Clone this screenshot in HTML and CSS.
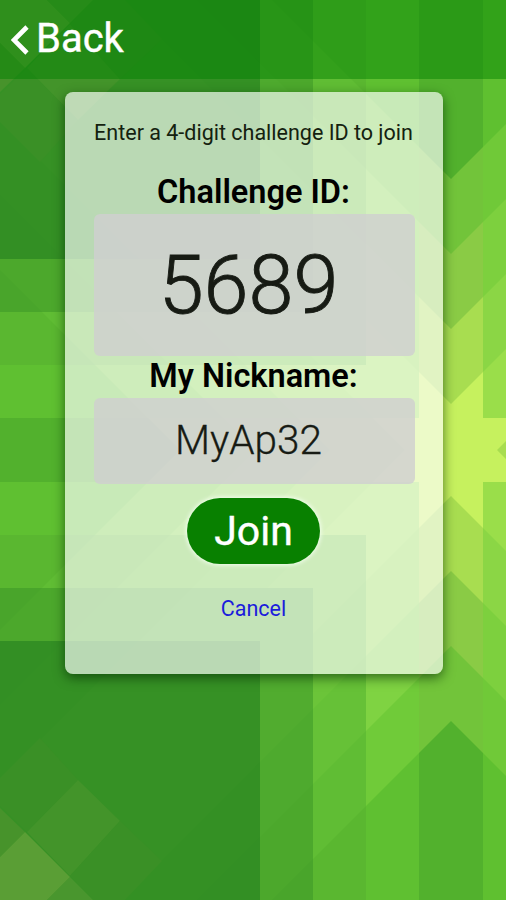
FILE: index.html
```html
<!DOCTYPE html>
<html lang="en">
<head>
<meta charset="utf-8">
<title>Join challenge</title>
<link rel="stylesheet" href="styles.css">
</head>
<body>
<svg class="backdrop" viewBox="0 0 506 900" aria-hidden="true">
  <defs>
    <path id="s4" d="M451 179L951-321L1222-50L722 450L1222 950L951 1221L451 721L-49 1221L-320 950L180 450L-320-50L-49-321Z"/>
    <path id="s3" d="M451 254L951-246L1147-50L647 450L1147 950L951 1146L451 646L-49 1146L-245 950L255 450L-245-50L-49-246Z"/>
    <path id="s2" d="M451 329L951-171L1072-50L572 450L1072 950L951 1071L451 571L-49 1071L-170 950L330 450L-170-50L-49-171Z"/>
    <path id="s1" d="M451 404L951-96L997-50L497 450L997 950L951 996L451 496L-49 996L-95 950L405 450L-95-50L-49-96Z"/>
    <clipPath id="cC"><path d="M0 0H419V418H0ZM0 482H419V900H0Z"/></clipPath>
    <clipPath id="cD"><path d="M0 0H366V365H0ZM0 535H366V900H0Z"/></clipPath>
    <clipPath id="cE"><path d="M0 0H313V312H0ZM0 588H313V900H0Z"/></clipPath>
    <clipPath id="cF"><path d="M0 0H260V259H0ZM0 641H260V900H0Z"/></clipPath>
    <clipPath id="cR"><path d="M483 0H506V418H483ZM483 482H506V900H483Z"/></clipPath>
  </defs>
  <rect width="506" height="900" fill="#52b12d"/>
  <use href="#s4" fill="#72c43a"/><use href="#s3" fill="#8acb45"/><use href="#s2" fill="#a8dd50"/><use href="#s1" fill="#c6f15e"/>
  <g clip-path="url(#cR)">
    <rect width="506" height="900" fill="#5fc030"/>
    <use href="#s4" fill="#70c938"/><use href="#s3" fill="#7dd03e"/><use href="#s2" fill="#8bd645"/><use href="#s1" fill="#9ade4a"/>
  </g>
  <g clip-path="url(#cC)">
    <rect width="506" height="900" fill="#5fc031"/>
    <use href="#s4" fill="#70cb39"/><use href="#s3" fill="#7fd342"/><use href="#s2" fill="#8cd947"/><use href="#s1" fill="#95de4c"/>
  </g>
  <g clip-path="url(#cD)">
    <rect width="506" height="900" fill="#5ab730"/>
    <use href="#s4" fill="#60bd34"/><use href="#s3" fill="#66c137"/><use href="#s2" fill="#6bc439"/><use href="#s1" fill="#70c73d"/>
  </g>
  <g clip-path="url(#cE)">
    <rect width="506" height="900" fill="#49a52b"/>
    <use href="#s4" fill="#4ca82c"/><use href="#s3" fill="#4eaa2e"/><use href="#s2" fill="#51ac2f"/>
  </g>
  <g clip-path="url(#cF)">
    <rect width="506" height="900" fill="#328e24"/>
    <use href="#s4" fill="#338f24"/><use href="#s3" fill="#349024"/><use href="#s2" fill="#369125"/>
    <g id="tiles">
      <path fill="#3a9026" d="M40 738L78 780L27 832L0 806V778Z"/>
      <path fill="#47932b" d="M0 808L25 832L0 857Z"/>
      <path fill="#43942a" d="M78 780L120 821L70 876L27 832Z"/>
      <path fill="#3a9026" d="M120 821L162 861L125 900H93L70 876Z"/>
      <path fill="#49962e" d="M70 877L93 900H47Z"/>
      <path fill="#5a9e35" d="M25 832L70 877L47 900H0V857Z"/>
    </g>
    <use href="#tiles" transform="matrix(1 0 0 -1 0 900)"/>
  </g>
</svg>
<div class="screen">
  <header class="topbar">
    <svg class="chevron" viewBox="0 0 18 30" aria-hidden="true"><path d="M16 2L3 15L16 28"/></svg>
    <span class="back">Back</span>
  </header>
  <main class="card">
    <p class="hint">Enter a 4-digit challenge ID to join</p>
    <h2 class="label label-id">Challenge ID:</h2>
    <div class="field field-id">5689</div>
    <h2 class="label label-name">My Nickname:</h2>
    <div class="field field-name">MyAp32</div>
    <div class="join">Join</div>
    <div class="cancel">Cancel</div>
  </main>
</div>
</body>
</html>
```

FILE: styles.css
```css
* { box-sizing: border-box; }
body {
  margin: 0;
  width: 506px;
  height: 900px;
  overflow: hidden;
  font-family: Roboto, "Liberation Sans", sans-serif;
  color: #000;
}
.backdrop {
  position: absolute;
  inset: 0;
  width: 506px;
  height: 900px;
}
.screen { position: relative; height: 900px; }
.topbar {
  display: flex;
  align-items: center;
  gap: 7px;
  height: 79px;
  padding-left: 11px;
  background: rgba(0, 128, 0, .47);
  color: #fff;
}
.chevron { width: 18px; height: 30px; margin-top: 1px; }
.chevron path { fill: none; stroke: #fff; stroke-width: 4.6; }
.back {
  margin-top: -2px;
  font-size: 40px;
  line-height: 48px;
  -webkit-text-stroke: .4px #fff;
}
.card {
  display: flex;
  flex-direction: column;
  align-items: center;
  width: 378px;
  height: 582px;
  margin: 13px 0 0 65px;
  padding: 0 29px 0 28px;
  border-radius: 8px;
  background: rgba(255, 255, 255, .66);
  box-shadow: 0 4px 12px rgba(0, 40, 0, .6);
}
.hint {
  margin: 28px 0 0;
  font-size: 21.5px;
  line-height: 26px;
  white-space: nowrap;
  color: #14210f;
}
.label {
  margin: 0;
  font-size: 32.5px;
  line-height: 38px;
  font-weight: 600;
}
.label-id { margin-top: 27px; }
.label-name { height: 42px; padding-top: 1px; }
.field {
  width: 321px;
  margin-left: 1px;
  padding-right: 11px;
  border-radius: 6px;
  background: rgba(208, 208, 208, .82);
  text-align: center;
  color: #171b14;
}
.field-id { height: 142px; margin-top: 3px; font-size: 81px; line-height: 144px; font-weight: 300; -webkit-text-stroke: .9px #171b14; }
.field-name { height: 86px; font-size: 40.5px; line-height: 85px; font-weight: 300; -webkit-text-stroke: .3px #171b14; }
.join {
  width: 133px;
  height: 66px;
  margin-top: 14px;
  border-radius: 33px;
  background: #088000;
  box-shadow: 0 0 4px 1px #f4fff0;
  color: #fff;
  font-size: 41px;
  line-height: 66px;
  text-align: center;
  -webkit-text-stroke: .4px #fff;
}
.cancel { margin-top: 32px; font-size: 21.5px; line-height: 26px; color: #1c1cdc; }
```
